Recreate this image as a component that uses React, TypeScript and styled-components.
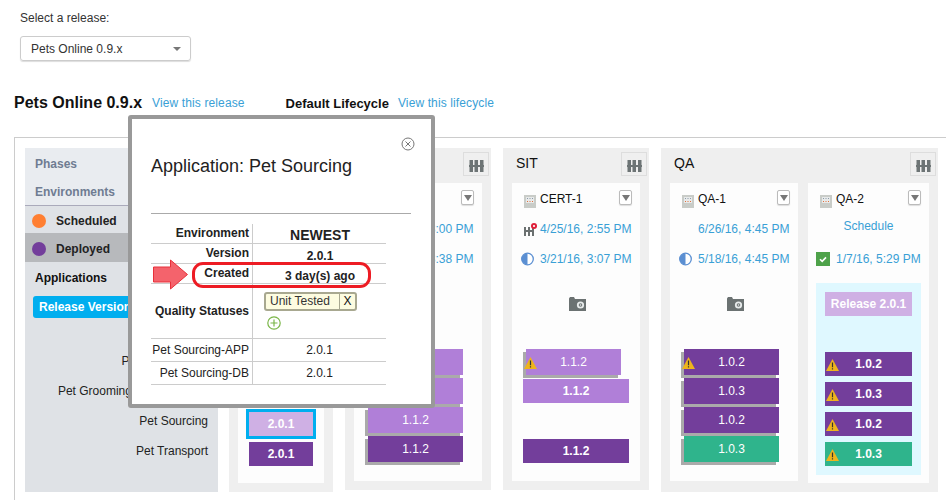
import React from 'react';
import styled, { createGlobalStyle } from 'styled-components';

type Tone = 'light' | 'dark' | 'green' | 'pale';

interface ChipData {
  label: string;
  tone: Tone;
  warn?: boolean;
  selected?: boolean;
}

const toneColors: Record<Tone, string> = {
  light: '#b07fd8',
  dark: '#733e9b',
  green: '#2fb48c',
  pale: '#cfb0e4'
};

const GlobalStyle = createGlobalStyle`
  html, body {
    margin: 0;
    padding: 0;
    background: #fff;
    font-family: "Liberation Sans", Arial, sans-serif;
    font-size: 12px;
    color: #333;
  }
`;

const Page = styled.div`
  position: relative;
  height: 500px;
  overflow: hidden;
`;

const SelectLabel = styled.div`
  margin: 11px 0 0 20px;
  line-height: 14px;
`;

const ReleaseSelect = styled.div`
  box-sizing: border-box;
  display: flex;
  align-items: center;
  justify-content: space-between;
  width: 171px;
  height: 25px;
  margin: 11px 0 0 20px;
  padding: 0 9px 0 10px;
  border: 1px solid #ccc;
  border-radius: 3px;
  box-shadow: 0 1px 1px #ddd;
`;

const Caret = styled.span`
  width: 0;
  height: 0;
  border-left: 4px solid transparent;
  border-right: 4px solid transparent;
  border-top: 4px solid #777;
`;

const TitleRow = styled.div`
  display: flex;
  align-items: center;
  height: 20px;
  margin-top: 32px;
  padding-left: 14px;
`;

const ReleaseTitle = styled.div`
  margin-right: 10px;
  font-size: 16px;
  font-weight: bold;
  color: #111;
`;

const LifecycleTitle = styled.div`
  margin-left: 41px;
  margin-right: 9px;
  font-size: 13px;
  font-weight: bold;
  color: #111;
`;

const TextLink = styled.a`
  color: #39a0d6;
  letter-spacing: 0.12px;
`;

const Board = styled.div`
  display: flex;
  align-items: flex-start;
  gap: 12px;
  margin: 24px 0 0 14px;
  padding: 10px 0 0 10px;
  height: 353px;
  border-top: 1px solid #ccc;
  border-left: 1px solid #ccc;
`;

const Sidebar = styled.div`
  width: 193px;
  height: 344px;
  margin-right: -1px;
  background: #dfe2e6;
  flex-shrink: 0;
`;

const SidebarHead = styled.div`
  box-sizing: border-box;
  height: 58px;
  padding: 9px 0 0 10px;
  background: #e9ecf0;
  border-bottom: 1px solid #aab;
`;

const HeadLabel = styled.div`
  height: 28px;
  line-height: 14px;
  font-weight: bold;
  color: #6f7c92;
`;

const LegendRow = styled.div<{ $active?: boolean; $height: number }>`
  box-sizing: border-box;
  display: flex;
  align-items: center;
  gap: 10px;
  height: ${p => p.$height}px;
  padding: 3px 0 0 7px;
  font-weight: bold;
  color: #222;
  background: ${p => (p.$active ? '#b7b9bc' : 'transparent')};
`;

const LegendDot = styled.span<{ $color: string }>`
  width: 14px;
  height: 14px;
  border-radius: 50%;
  background: ${p => p.$color};
`;

const AppsLabel = styled.div`
  height: 32px;
  line-height: 32px;
  padding-left: 10px;
  font-weight: bold;
  color: #111;
`;

const VersionsButton = styled.div`
  width: 160px;
  height: 22px;
  line-height: 22px;
  margin: 2px 0 28px 8px;
  padding-left: 6px;
  border-radius: 3px;
  background: #00aeef;
  color: #fff;
  font-weight: bold;
`;

const AppName = styled.div`
  height: 30px;
  line-height: 30px;
  padding-right: 10px;
  text-align: right;
  color: #222;
`;

const Group = styled.div<{ $height: number }>`
  box-sizing: border-box;
  flex-shrink: 0;
  height: ${p => p.$height}px;
  padding: 0 9px;
  background: #efefef;
`;

const GroupHead = styled.div`
  display: flex;
  justify-content: space-between;
  height: 35px;
  margin: 0 -7px 0 4px;
  padding-top: 4px;
  box-sizing: border-box;
`;

const GroupName = styled.div`
  font-size: 14px;
  line-height: 22px;
  color: #111;
`;

const ToggleButton = styled.div`
  box-sizing: border-box;
  display: flex;
  align-items: center;
  justify-content: center;
  width: 26px;
  height: 24px;
  margin-left: auto;
  padding-top: 4px;
  border: 1px solid #ddd;
`;

const Cards = styled.div`
  display: flex;
  align-items: flex-start;
  gap: 10px;
`;

const Card = styled.div<{ $width: number; $height: number }>`
  box-sizing: border-box;
  width: ${p => p.$width}px;
  height: ${p => p.$height}px;
  padding: 7px 8px 0;
  background: #fdfdfd;
`;

const EnvHeader = styled.div`
  display: flex;
  height: 24px;
  padding-left: 4px;
`;

const EnvIconSlot = styled.div`
  margin-top: 5px;
  height: 13px;
`;

const EnvName = styled.div`
  margin-left: 4px;
  line-height: 18px;
  color: #111;
`;

const MenuButton = styled.div`
  box-sizing: border-box;
  display: flex;
  align-items: center;
  justify-content: center;
  width: 13px;
  height: 15px;
  margin-left: auto;
  border: 1px solid #bbb;
  border-radius: 2px;
  background: #fff;
  box-shadow: 0 1px 1px #ddd;
`;

const MenuCaret = styled.span`
  width: 0;
  height: 0;
  border-left: 4px solid transparent;
  border-right: 4px solid transparent;
  border-top: 6px solid #777;
`;

const DateRow = styled.div`
  display: flex;
  align-items: center;
  height: 30px;
  color: #39a0d6;
`;

const StatusSlot = styled.div<{ $inset: number }>`
  display: flex;
  align-items: center;
  width: 20px;
  padding-left: ${p => p.$inset}px;
  box-sizing: border-box;
  flex-shrink: 0;
`;

const ScheduleLink = styled.div`
  width: 100%;
  margin-top: -6px;
  text-align: center;
  color: #39a0d6;
`;

const Snapshot = styled.div`
  display: flex;
  justify-content: center;
  height: 14px;
  margin: 23px 0 39px;
  padding-left: 3px;
`;

const ReleasePanel = styled.div`
  box-sizing: border-box;
  height: 192px;
  margin-top: 9px;
  padding: 9px 6px;
  background: #dff8ff;
`;

const ReleaseChip = styled.div`
  height: 24px;
  line-height: 24px;
  margin: 0 3px 36px;
  text-align: center;
  font-weight: bold;
  color: #fff;
  background: ${toneColors.pale};
`;

const ChipList = styled.div<{ $top?: number }>`
  margin-top: ${p => p.$top ?? 0}px;
`;

const Slot = styled.div`
  height: 30px;
  padding: 0 3px;
`;

const FlatChip = styled.div<{ $tone: Tone; $selected?: boolean }>`
  position: relative;
  height: 24px;
  line-height: 24px;
  text-align: center;
  font-weight: bold;
  color: #fff;
  background: ${p => toneColors[p.$tone]};
  outline: ${p => (p.$selected ? '3px solid #00aeef' : 'none')};
`;

const StackChip = styled.div<{ $tone: Tone }>`
  position: relative;
  width: 95px;
  height: 26px;
  line-height: 27px;
  margin: -1px 0 0 3px;
  text-align: center;
  color: #fff;
  background: ${p => toneColors[p.$tone]};
  box-shadow: -3px 3px 0 #aaa;
`;

const WarnBadge = styled.svg<{ $left: number; $top: number }>`
  position: absolute;
  left: ${p => p.$left}px;
  top: ${p => p.$top}px;
`;

const Modal = styled.div`
  box-sizing: border-box;
  position: absolute;
  left: 128px;
  top: 115px;
  width: 307px;
  height: 293px;
  padding: 36px 0 0 19px;
  background: #fff;
  border: 4px solid #999;
  border-radius: 3px;
`;

const CloseIcon = styled.svg`
  position: absolute;
  top: 18px;
  right: 16px;
`;

const ModalTitle = styled.div`
  font-size: 18px;
  line-height: 22px;
  color: #222;
`;

const ModalRule = styled.div`
  width: 260px;
  height: 1px;
  margin: 36px 0 10px;
  background: #aaa;
`;

const InfoTable = styled.table`
  width: 235px;
  border-collapse: separate;
  border-spacing: 0;
  table-layout: fixed;
`;

const LabelCell = styled.td<{ $height: number; $bold?: boolean; $raised?: boolean }>`
  box-sizing: border-box;
  width: 102px;
  height: ${p => p.$height}px;
  padding: 0 3px ${p => (p.$raised ? '2px' : '0')} 0;
  text-align: right;
  white-space: nowrap;
  font-weight: ${p => (p.$bold ? 'bold' : 'normal')};
  color: #222;
  border-right: 1px solid #ccc;
  border-bottom: 1px solid #ccc;
`;

const ValueCell = styled.td<{ $large?: boolean; $bold?: boolean }>`
  box-sizing: border-box;
  padding: ${p => (p.$large ? '3px 0 0 1px' : p.$bold ? '4px 0 0 1px' : '0')};
  text-align: center;
  font-size: ${p => (p.$large ? '14px' : '12px')};
  line-height: ${p => (p.$large ? '16px' : 'normal')};
  font-weight: ${p => (p.$bold ? 'bold' : 'normal')};
  color: #222;
  border-bottom: 1px solid #ccc;
`;

const StatusCell = styled.td`
  padding: 8px 0 0 11px;
  vertical-align: top;
  border-bottom: 1px solid #ccc;
`;

const StatusTag = styled.div`
  box-sizing: border-box;
  display: flex;
  width: 93px;
  height: 19px;
  line-height: 15px;
  border: 2px solid #a8a890;
  border-radius: 3px;
  background: #fdfce0;
  color: #333;
`;

const TagName = styled.span`
  flex: 1;
  padding-left: 4px;
`;

const TagRemove = styled.span`
  width: 15px;
  text-align: center;
  border-left: 1px solid #a8a890;
  color: #111;
`;

const AddIcon = styled.svg`
  display: block;
  margin: 5px 0 0 3px;
`;

const HighlightOval = styled.div`
  box-sizing: border-box;
  position: absolute;
  left: 192px;
  top: 262px;
  width: 179px;
  height: 26px;
  border: 3px solid #ed1c24;
  border-radius: 11px;
`;

const PointerArrow = styled.svg`
  position: absolute;
  left: 153px;
  top: 259px;
`;

const ColumnsIcon = () => (
  <svg width="15" height="12" viewBox="0 0 15 12">
    <path d="M0.5 0H4v12H0.5zM5.5 0H9v12H5.5zM11 0h3.5v12H11zM0 5h15v2H0z" fill="#6d7475" />
  </svg>
);

const ServerIcon = () => (
  <svg width="12" height="13" viewBox="0 0 12 13">
    <rect x="0" y="0" width="12" height="13" fill="#c9ccc8" />
    <rect x="2" y="2" width="8" height="6" fill="#e8eaea" />
    <path d="M3 3h1v1H3zM5.5 3h1v1h-1zM8 3h1v1H8z" fill="#8a9aa8" />
    <path d="M3 6h1v1H3zM5.5 6h1v1h-1zM8 6h1v1H8z" fill="#e2703a" />
  </svg>
);

const AlertColumnsIcon = () => (
  <svg width="13" height="13" viewBox="0 0 13 13">
    <path d="M0 4h2v9H0zM4 4h2v9H4zM8 4h2v9H8zM0 7h10v2H0z" fill="#6b7070" />
    <circle cx="10" cy="3" r="3" fill="#e0203a" />
    <path d="M9 2l2 2M11 2l-2 2" stroke="#fff" strokeWidth="0.8" />
  </svg>
);

const HalfCircleIcon = () => (
  <svg width="13" height="14" viewBox="0 0 13 14">
    <circle cx="6.5" cy="7" r="5.8" fill="#fff" stroke="#5b8fd2" strokeWidth="1.3" />
    <path d="M6.5 1.2a5.8 5.8 0 0 0 0 11.6z" fill="#5b8fd2" />
  </svg>
);

const CheckIcon = () => (
  <svg width="14" height="14" viewBox="0 0 14 14">
    <rect width="14" height="14" fill="#4ea24a" />
    <path d="M4 7.2l2.2 2.2L10 5.4" fill="none" stroke="#fff" strokeWidth="1.6" />
  </svg>
);

const CameraIcon = () => (
  <svg width="17" height="14" viewBox="0 0 17 14">
    <path d="M0 1.5L1 0h4l1 2h11v12H0z" fill="#6b7272" />
    <circle cx="11.5" cy="8" r="3.6" fill="#e8ecec" />
    <circle cx="11.5" cy="8" r="1.8" fill="#6b7272" />
    <circle cx="11.5" cy="8" r="0.8" fill="#e8ecec" />
  </svg>
);

const Warning = ({ left, top }: { left: number; top: number }) => (
  <WarnBadge $left={left} $top={top} width="13" height="12" viewBox="0 0 13 12">
    <path d="M6.5 0L13 12H0z" fill="#eeb41c" />
    <path d="M5.9 3.5h1.2v4.8H5.9zM5.9 9.2h1.2v1.3H5.9z" fill="#333" />
  </WarnBadge>
);

const stacked = (chips: (ChipData | null)[]) => (
  <ChipList>
    {chips.map((chip, i) => (
      <Slot key={i}>
        {chip && (
          <StackChip $tone={chip.tone}>
            {chip.warn && <Warning left={-2} top={8} />}
            {chip.label}
          </StackChip>
        )}
      </Slot>
    ))}
  </ChipList>
);

const flat = (chips: (ChipData | null)[], top?: number) => (
  <ChipList $top={top}>
    {chips.map((chip, i) => (
      <Slot key={i}>
        {chip && (
          <FlatChip $tone={chip.tone} $selected={chip.selected}>
            {chip.warn && <Warning left={1} top={7} />}
            {chip.label}
          </FlatChip>
        )}
      </Slot>
    ))}
  </ChipList>
);

const Menu = () => (
  <MenuButton>
    <MenuCaret />
  </MenuButton>
);

const EnvIcon = () => (
  <EnvIconSlot>
    <ServerIcon />
  </EnvIconSlot>
);

const App: React.FC = () => (
  <Page>
    <GlobalStyle />
    <SelectLabel>Select a release:</SelectLabel>
    <ReleaseSelect>
      Pets Online 0.9.x
      <Caret />
    </ReleaseSelect>
    <TitleRow>
      <ReleaseTitle>Pets Online 0.9.x</ReleaseTitle>
      <TextLink>View this release</TextLink>
      <LifecycleTitle>Default Lifecycle</LifecycleTitle>
      <TextLink>View this lifecycle</TextLink>
    </TitleRow>
    <Board>
      <Sidebar>
        <SidebarHead>
          <HeadLabel>Phases</HeadLabel>
          <HeadLabel>Environments</HeadLabel>
        </SidebarHead>
        <LegendRow $height={27}>
          <LegendDot $color="#ff7f32" />
          Scheduled
        </LegendRow>
        <LegendRow $active $height={29}>
          <LegendDot $color="#733e9b" />
          Deployed
        </LegendRow>
        <AppsLabel>Applications</AppsLabel>
        <VersionsButton>Release Versions</VersionsButton>
        <AppName>Pet Supply Tags</AppName>
        <AppName>Pet Grooming Appointments</AppName>
        <AppName>Pet Sourcing</AppName>
        <AppName>Pet Transport</AppName>
      </Sidebar>

      <Group $height={344}>
        <GroupHead />
        <Card $width={86} $height={300}>
          {flat(
            [
              { label: '2.0.1', tone: 'pale', selected: true },
              { label: '2.0.1', tone: 'dark' }
            ],
            222
          )}
        </Card>
      </Group>

      <Group $height={342}>
        <GroupHead>
          <ToggleButton>
            <ColumnsIcon />
          </ToggleButton>
        </GroupHead>
        <Card $width={128} $height={298}>
          <EnvHeader>
            <Menu />
          </EnvHeader>
          <DateRow>
            <StatusSlot $inset={4} />
            4/25/16, 3:00 PM
          </DateRow>
          <DateRow>
            <StatusSlot $inset={1} />
            3/21/16, 3:38 PM
          </DateRow>
          <Snapshot />
          {stacked([
            { label: '1.1.2', tone: 'light' },
            { label: '1.1.2', tone: 'light' },
            { label: '1.1.2', tone: 'light' },
            { label: '1.1.2', tone: 'dark' }
          ])}
        </Card>
      </Group>

      <Group $height={342}>
        <GroupHead>
          <GroupName>SIT</GroupName>
          <ToggleButton>
            <ColumnsIcon />
          </ToggleButton>
        </GroupHead>
        <Card $width={128} $height={298}>
          <EnvHeader>
            <EnvIcon />
            <EnvName>CERT-1</EnvName>
            <Menu />
          </EnvHeader>
          <DateRow>
            <StatusSlot $inset={4}>
              <AlertColumnsIcon />
            </StatusSlot>
            4/25/16, 2:55 PM
          </DateRow>
          <DateRow>
            <StatusSlot $inset={1}>
              <HalfCircleIcon />
            </StatusSlot>
            3/21/16, 3:07 PM
          </DateRow>
          <Snapshot>
            <CameraIcon />
          </Snapshot>
          <ChipList>
            <Slot>
              <StackChip $tone="light">
                <Warning left={-2} top={8} />
                1.1.2
              </StackChip>
            </Slot>
            <Slot>
              <FlatChip $tone="light">1.1.2</FlatChip>
            </Slot>
            <Slot />
            <Slot>
              <FlatChip $tone="dark">1.1.2</FlatChip>
            </Slot>
          </ChipList>
        </Card>
      </Group>

      <Group $height={344}>
        <GroupHead>
          <GroupName>QA</GroupName>
          <ToggleButton>
            <ColumnsIcon />
          </ToggleButton>
        </GroupHead>
        <Cards>
          <Card $width={128} $height={298}>
            <EnvHeader>
              <EnvIcon />
              <EnvName>QA-1</EnvName>
              <Menu />
            </EnvHeader>
            <DateRow>
              <StatusSlot $inset={4} />
              6/26/16, 4:45 PM
            </DateRow>
            <DateRow>
              <StatusSlot $inset={1}>
                <HalfCircleIcon />
              </StatusSlot>
              5/18/16, 4:45 PM
            </DateRow>
            <Snapshot>
              <CameraIcon />
            </Snapshot>
            {stacked([
              { label: '1.0.2', tone: 'dark', warn: true },
              { label: '1.0.3', tone: 'dark' },
              { label: '1.0.2', tone: 'dark' },
              { label: '1.0.3', tone: 'green' }
            ])}
          </Card>
          <Card $width={121} $height={300}>
            <EnvHeader>
              <EnvIcon />
              <EnvName>QA-2</EnvName>
              <Menu />
            </EnvHeader>
            <DateRow>
              <ScheduleLink>Schedule</ScheduleLink>
            </DateRow>
            <DateRow>
              <StatusSlot $inset={0}>
                <CheckIcon />
              </StatusSlot>
              1/7/16, 5:29 PM
            </DateRow>
            <ReleasePanel>
              <ReleaseChip>Release 2.0.1</ReleaseChip>
              {flat([
                { label: '1.0.2', tone: 'dark', warn: true },
                { label: '1.0.3', tone: 'dark', warn: true },
                { label: '1.0.2', tone: 'dark', warn: true },
                { label: '1.0.3', tone: 'green', warn: true }
              ])}
            </ReleasePanel>
          </Card>
        </Cards>
      </Group>
    </Board>

    <Modal>
      <CloseIcon width="14" height="14" viewBox="0 0 14 14">
        <circle cx="7" cy="7" r="6" fill="none" stroke="#777" />
        <path d="M4.5 4.5l5 5M9.5 4.5l-5 5" stroke="#777" />
      </CloseIcon>
      <ModalTitle>Application: Pet Sourcing</ModalTitle>
      <ModalRule />
      <InfoTable>
        <tbody>
          <tr>
            <LabelCell $height={20} $bold $raised>Environment</LabelCell>
            <ValueCell $large $bold>NEWEST</ValueCell>
          </tr>
          <tr>
            <LabelCell $height={20} $bold $raised>Version</LabelCell>
            <ValueCell $bold>2.0.1</ValueCell>
          </tr>
          <tr>
            <LabelCell $height={20} $bold $raised>Created</LabelCell>
            <ValueCell $bold>3 day(s) ago</ValueCell>
          </tr>
          <tr>
            <LabelCell $height={55} $bold>Quality Statuses</LabelCell>
            <StatusCell>
              <StatusTag>
                <TagName>Unit Tested</TagName>
                <TagRemove>X</TagRemove>
              </StatusTag>
              <AddIcon width="14" height="14" viewBox="0 0 14 14">
                <circle cx="7" cy="7" r="6.2" fill="none" stroke="#7ab648" strokeWidth="1.2" />
                <path d="M7 3.5v7M3.5 7h7" stroke="#7ab648" strokeWidth="1.2" />
              </AddIcon>
            </StatusCell>
          </tr>
          <tr>
            <LabelCell $height={23}>Pet Sourcing-APP</LabelCell>
            <ValueCell>2.0.1</ValueCell>
          </tr>
          <tr>
            <LabelCell $height={23}>Pet Sourcing-DB</LabelCell>
            <ValueCell>2.0.1</ValueCell>
          </tr>
        </tbody>
      </InfoTable>
    </Modal>

    <HighlightOval />
    <PointerArrow width="36" height="31" viewBox="0 0 36 31">
      <path d="M0.5 8h17V1l17 14.5-17 14.5v-7h-17z" fill="#f4636c" stroke="#e8303a" />
    </PointerArrow>
  </Page>
);

export default App;
